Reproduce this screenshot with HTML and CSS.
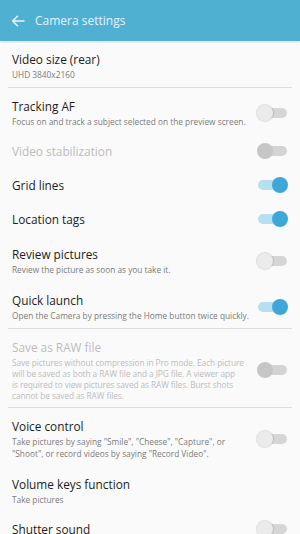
FILE: index.html
```html
<!DOCTYPE html>
<html lang="en">
<head>
    <meta charset="UTF-8">
    <meta name="viewport" content="width=device-width, initial-scale=1.0">
    <title>Camera settings</title>
    <link rel="stylesheet" href="styles.css">
</head>
<body>
    <div class="app-bar">
        <svg class="back" width="14" height="12" viewBox="0 0 14 12">
            <path d="M13 6H2M6.5 1.2L1.6 6l4.9 4.8" fill="none" stroke="#e6f5fb" stroke-width="1.5" stroke-linecap="round" stroke-linejoin="round"/>
        </svg>
        <span class="app-title">Camera settings</span>
    </div>

    <div class="settings">
        <div class="row">
            <div class="text">
                <div class="title">Video size (rear)</div>
                <div class="sub">UHD 3840x2160</div>
            </div>
        </div>
        <div class="divider"></div>

        <div class="row">
            <div class="text">
                <div class="title">Tracking AF</div>
                <div class="sub">Focus on and track a subject selected on the preview screen.</div>
            </div>
            <span class="switch"></span>
        </div>
        <div class="row single disabled">
            <div class="text">
                <div class="title">Video stabilization</div>
            </div>
            <span class="switch"></span>
        </div>
        <div class="row single">
            <div class="text">
                <div class="title">Grid lines</div>
            </div>
            <span class="switch on"></span>
        </div>
        <div class="row single">
            <div class="text">
                <div class="title">Location tags</div>
            </div>
            <span class="switch on"></span>
        </div>
        <div class="row">
            <div class="text">
                <div class="title">Review pictures</div>
                <div class="sub">Review the picture as soon as you take it.</div>
            </div>
            <span class="switch"></span>
        </div>
        <div class="row">
            <div class="text">
                <div class="title">Quick launch</div>
                <div class="sub">Open the Camera by pressing the Home button twice quickly.</div>
            </div>
            <span class="switch on"></span>
        </div>
        <div class="divider"></div>

        <div class="row disabled">
            <div class="text">
                <div class="title">Save as RAW file</div>
                <div class="sub raw">Save pictures without compression in Pro mode. Each picture<br>will be saved as both a RAW file and a JPG file. A viewer app<br>is required to view pictures saved as RAW files. Burst shots<br>cannot be saved as RAW files.</div>
            </div>
            <span class="switch"></span>
        </div>
        <div class="divider"></div>

        <div class="row">
            <div class="text">
                <div class="title">Voice control</div>
                <div class="sub">Take pictures by saying "Smile", "Cheese", "Capture", or "Shoot", or record videos by saying "Record Video".</div>
            </div>
            <span class="switch"></span>
        </div>
        <div class="row">
            <div class="text">
                <div class="title">Volume keys function</div>
                <div class="sub">Take pictures</div>
            </div>
        </div>
        <div class="row single">
            <div class="text">
                <div class="title">Shutter sound</div>
            </div>
            <span class="switch"></span>
        </div>
    </div>
</body>
</html>
```

FILE: styles.css
```css
body {
    margin: 0;
    padding: 0;
    background-color: #fafafa;
    font-family: "Open Sans", "Noto Sans", sans-serif;
    overflow: hidden;
}
.app-bar {
    height: 41px;
    background-color: #50b0d2;
    display: flex;
    align-items: center;
    padding-left: 11px;
    box-shadow: 0 1px 2px rgba(0, 0, 0, 0.15);
}
.back {
    margin-right: 10px;
}
.app-title {
    color: #e3f3fa;
    font-size: 12px;
}
.row {
    display: flex;
    align-items: center;
    padding: 10px 13px 6px 12px;
    min-height: 30px;
}
.row.single {
    padding: 9px 13px 9px 12px;
    min-height: 16px;
}
.text {
    flex: 1;
    max-width: 240px;
}
.title {
    font-size: 11.8px;
    line-height: 16px;
    color: #1c1c1c;
}
.sub {
    font-size: 8.3px;
    line-height: 12px;
    margin-top: 2px;
    color: #7a7a7a;
}
.disabled .title,
.disabled .sub {
    color: #bcbcbc;
}
.sub.raw {
    line-height: 11px;
    letter-spacing: -0.08px;
    white-space: nowrap;
}
.divider {
    height: 1px;
    margin: 0 8px;
    background-color: #dedede;
}
.switch {
    margin-left: auto;
    position: relative;
    width: 29px;
    height: 10px;
    border-radius: 5px;
    background-color: #d6d6d6;
}
.switch::after {
    content: "";
    position: absolute;
    left: -1px;
    top: -3px;
    width: 16px;
    height: 16px;
    border-radius: 50%;
    background-color: #ebebeb;
    box-shadow: 0 0 1px 1px rgba(0, 0, 0, 0.12);
}
.switch.on {
    background-color: #b6e0f1;
}
.switch.on::after {
    left: auto;
    right: -1px;
    background-color: #3da8d8;
    box-shadow: none;
}
.disabled .switch {
    background-color: #d3d3d3;
}
.disabled .switch::after {
    background-color: #c6c6c6;
    box-shadow: none;
}
```
